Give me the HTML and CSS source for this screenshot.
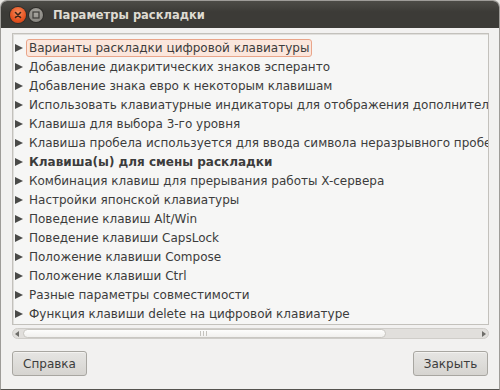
FILE: index.html
```html
<!DOCTYPE html>
<html lang="ru">
<head>
<meta charset="utf-8">
<link rel="stylesheet" href="styles.css">
</head>
<body>
<div class="window">
  <div class="titlebar">
    <span class="btn-close"><svg width="10" height="10" viewBox="0 0 10 10"><path d="M2.5 2.5L7.5 7.5M7.5 2.5L2.5 7.5" stroke="#3a2418" stroke-width="1.6" stroke-linecap="round"/></svg></span>
    <span class="btn-min"><svg width="8" height="8" viewBox="0 0 8 8"><rect x="1" y="1" width="6" height="6" fill="none" stroke="#3c3b37" stroke-width="1.2"/></svg></span>
    <span class="title">Параметры раскладки</span>
  </div>
  <div class="content">
    <div class="scrolled">
      <ul class="tree">
        <li class="row selected"><span class="arrow"></span><span class="label">Варианты раскладки цифровой клавиатуры</span></li>
        <li class="row"><span class="arrow"></span><span class="label">Добавление диакритических знаков эсперанто</span></li>
        <li class="row"><span class="arrow"></span><span class="label">Добавление знака евро к некоторым клавишам</span></li>
        <li class="row"><span class="arrow"></span><span class="label">Использовать клавиатурные индикаторы для отображения дополнительных раскладок</span></li>
        <li class="row"><span class="arrow"></span><span class="label">Клавиша для выбора 3-го уровня</span></li>
        <li class="row"><span class="arrow"></span><span class="label">Клавиша пробела используется для ввода символа неразрывного пробела</span></li>
        <li class="row bold"><span class="arrow"></span><span class="label">Клавиша(ы) для смены раскладки</span></li>
        <li class="row"><span class="arrow"></span><span class="label">Комбинация клавиш для прерывания работы X-сервера</span></li>
        <li class="row"><span class="arrow"></span><span class="label">Настройки японской клавиатуры</span></li>
        <li class="row"><span class="arrow"></span><span class="label">Поведение клавиш Alt/Win</span></li>
        <li class="row"><span class="arrow"></span><span class="label">Поведение клавиши CapsLock</span></li>
        <li class="row"><span class="arrow"></span><span class="label">Положение клавиши Compose</span></li>
        <li class="row"><span class="arrow"></span><span class="label">Положение клавиши Ctrl</span></li>
        <li class="row"><span class="arrow"></span><span class="label">Разные параметры совместимости</span></li>
        <li class="row"><span class="arrow"></span><span class="label">Функция клавиши delete на цифровой клавиатуре</span></li>
      </ul>
      <div class="hscroll">
        <span class="sarrow left"></span>
        <div class="trough"><div class="thumb"><span class="grip"></span></div></div>
        <span class="sarrow right"></span>
      </div>
    </div>
    <div class="buttons">
      <button class="button">Справка</button>
      <button class="button">Закрыть</button>
    </div>
  </div>
</div>
</body>
</html>
```
FILE: styles.css
```css
html, body {
  margin: 0;
  padding: 0;
  background: #e9e7e3;
}
body {
  width: 500px;
  height: 390px;
  overflow: hidden;
  font-family: "DejaVu Sans", sans-serif;
}
.window {
  width: 498px;
  height: 388px;
  background: #f2f1f0;
  border: 1px solid #9e9c98;
  border-bottom-color: #55534f;
  border-radius: 7px 7px 0 0;
  overflow: hidden;
  display: flex;
  flex-direction: column;
}
.titlebar {
  height: 27px;
  flex: none;
  background: linear-gradient(#4d4c47, #3c3b37 40%, #3c3b37);
  display: flex;
  align-items: center;
  padding-left: 9px;
  box-sizing: border-box;
}
.btn-close {
  width: 16px;
  height: 16px;
  border-radius: 50%;
  background: radial-gradient(circle at 50% 35%, #f78d5e, #e5521f 60%, #c2401a);
  box-shadow: 0 0 0 1px #2e2d2a;
  display: flex;
  align-items: center;
  justify-content: center;
}
.btn-min {
  width: 14px;
  height: 14px;
  border-radius: 50%;
  margin-left: 3px;
  background: radial-gradient(circle at 50% 35%, #a9a7a1, #7d7b76);
  box-shadow: 0 0 0 1px #2e2d2a;
  display: flex;
  align-items: center;
  justify-content: center;
}
.title {
  margin-left: 10px;
  color: #dfdbd2;
  font-weight: bold;
  font-size: 11.5px;
}
.content {
  flex: 1;
  display: flex;
  flex-direction: column;
  padding: 5px 10px 0 11px;
}
.scrolled {
  display: flex;
  flex-direction: column;
  flex: none;
}
.tree {
  list-style: none;
  margin: 0;
  padding: 4px 0 1px 0;
  height: 285px;
  background: #f6f6f5;
  border: 1px solid #c3c1bc;
  box-shadow: inset 1px 1px 0 #e0dfdc;
  overflow: hidden;
}
.row {
  height: 19px;
  display: flex;
  align-items: center;
  font-size: 12px;
  color: #3c3c3c;
  white-space: nowrap;
}
.row.bold { font-weight: bold; }
.arrow {
  width: 0;
  height: 0;
  border-top: 4.5px solid transparent;
  border-bottom: 4.5px solid transparent;
  border-left: 8px solid #4a4a48;
  margin-left: 2px;
  margin-right: 3px;
  flex: none;
}
.label {
  padding: 1px 2px;
  border: 1px solid transparent;
  border-radius: 3px;
}
.selected .label {
  background: #fbe6dc;
  border-color: #e9a58a;
}
.hscroll {
  margin-top: 3px;
  height: 9px;
  display: flex;
  align-items: center;
  border: 1px solid #cfcdc9;
  border-radius: 6px;
  background: #e1dfdc;
  padding: 0 2px;
}
.sarrow {
  width: 0;
  height: 0;
  border-top: 3px solid transparent;
  border-bottom: 3px solid transparent;
  flex: none;
}
.sarrow.left { border-right: 4px solid #6e6d69; margin-right: 4px; }
.sarrow.right { border-left: 4px solid #6e6d69; margin-left: 4px; }
.trough {
  flex: 1;
  height: 9px;
  display: flex;
}
.thumb {
  width: 363px;
  height: 9px;
  background: linear-gradient(#fdfdfc, #f1f0ee);
  border: 1px solid #c9c7c2;
  border-radius: 5px;
  box-sizing: border-box;
  display: flex;
  justify-content: center;
  align-items: center;
}
.grip {
  width: 9px;
  height: 5px;
  background: repeating-linear-gradient(90deg, #c4c2bd 0 1px, transparent 1px 3px);
}
.buttons {
  display: flex;
  justify-content: space-between;
  margin-top: 12px;
  padding-right: 1px;
}
.button {
  width: 75px;
  height: 25px;
  font-family: "DejaVu Sans", sans-serif;
  font-size: 12px;
  color: #3c3c3c;
  background: linear-gradient(#e6e5e3, #d6d4d0);
  border: 1px solid #a8a6a1;
  border-radius: 3px;
  box-shadow: inset 0 1px 0 #f3f2f0;
  padding: 0;
}
```
